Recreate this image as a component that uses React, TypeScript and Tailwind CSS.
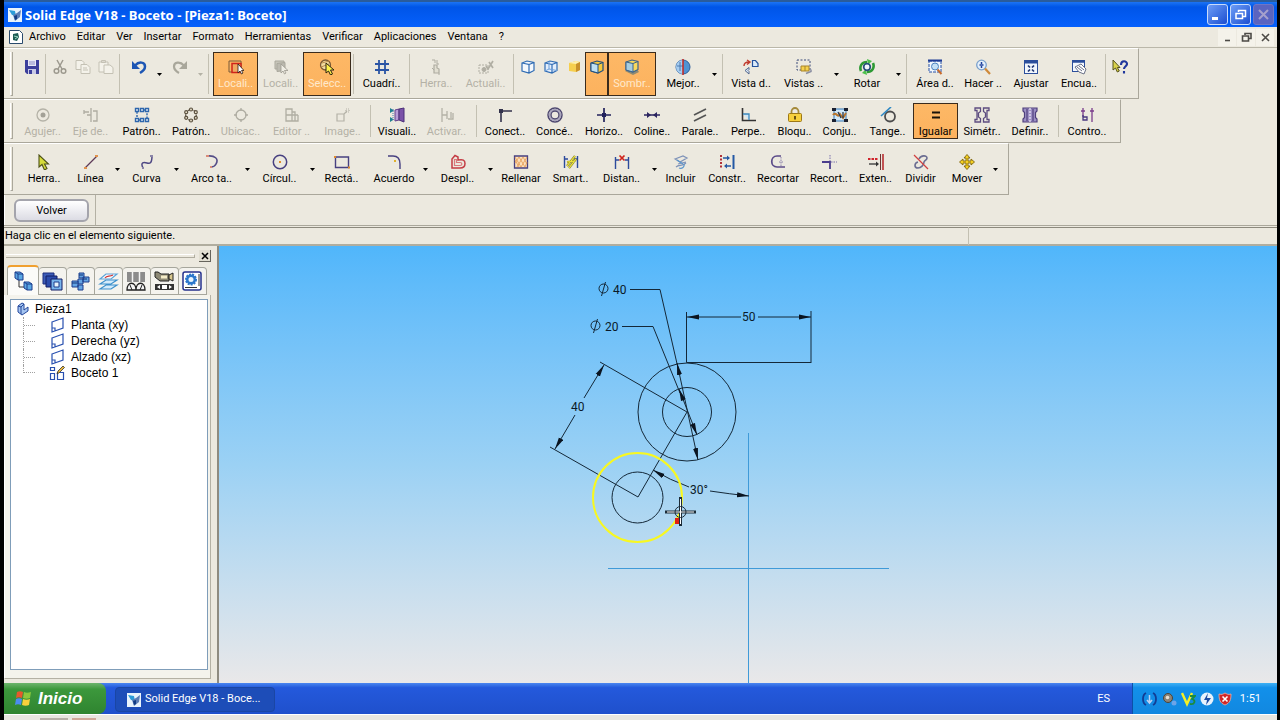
import type { ReactNode } from 'react';

const art: Record<string, ReactNode> = {
  save: (
    <>
      <path d="M1 1h14v14H3l-2-2z" fill="#3c3f9c" />
      <rect x="4" y="1" width="8" height="6" fill="#e8e8f6" />
      <path d="M5 3h6M5 5h6" stroke="#8a8cc8" />
      <rect x="4" y="10" width="8" height="5" fill="#c9cae6" />
      <rect x="5" y="11" width="3" height="4" fill="#3c3f9c" />
    </>
  ),
  cut: (
    <g fill="none" stroke="#9c998e" strokeWidth="1.5">
      <path d="M5 1l5 9M11 1L6 10" />
      <circle cx="4.5" cy="12" r="2.3" />
      <circle cx="11.5" cy="12" r="2.3" />
    </g>
  ),
  copy: (
    <g fill="#f4f2ea" stroke="#c4c1b4">
      <path d="M1 1.5h6l2 2v7H1z" />
      <path d="M6 5.500h6l3 3v6H6z" />
      <path d="M8 9h4M8 11h5" />
    </g>
  ),
  paste: (
    <g fill="#f4f2ea" stroke="#c4c1b4">
      <path d="M1 3h9v10H1zM3.500 1.500h4v2h-4z" />
      <path d="M6 6h6l3 2.500v6H6z" />
    </g>
  ),
  undo: (
    <>
      <path d="M4 6.500C8 2 14 3 14 7.500c0 3-2.500 5-5 6.500" fill="none" stroke="#1d56b4" strokeWidth="2.500" />
      <path d="M1 2v8h8z" fill="#1d56b4" />
    </>
  ),
  redo: (
    <>
      <path d="M12 6.500C8 2 2 3 2 7.500c0 3 2.500 5 5 6.500" fill="none" stroke="#a9a79b" strokeWidth="2.200" />
      <path d="M15 2v8H7z" fill="#a9a79b" />
    </>
  ),
  locate: (
    <>
      <path d="M1 2h12v11H1z" fill="none" stroke="#7a5a38" />
      <path d="M4 4.500h9v9H4z" fill="#f0a860" stroke="#d0241a" strokeWidth="1.500" />
      <path d="M10 5v9l2-2 1.500 3 1.500-1-1.500-2.500H16z" fill="#fff" stroke="#2b1a10" strokeWidth=".8" />
    </>
  ),
  locateOff: (
    <>
      <path d="M2 2h9v8H2z" fill="#c8c6bb" stroke="#a9a79c" />
      <path d="M4 4.500l8-1v8l-8 1z" fill="#bcbab0" stroke="#a9a79c" />
      <path d="M8 5v9l2-2 1.500 3 1.500-1-1.500-2.500H15z" fill="#efede4" stroke="#9a988e" strokeWidth=".8" />
    </>
  ),
  select: (
    <>
      <circle cx="6.500" cy="6" r="5" fill="#f3dca0" stroke="#7c5a34" strokeWidth="1.300" />
      <path d="M3 4l7-2M2 8l8-3" stroke="#b58a4c" />
      <path d="M7 4v10l2.500-2 2 4 2-1-2-4H15z" fill="#fff14a" stroke="#2c2410" />
    </>
  ),
  grid: <path d="M5 1v14M11 1v14M1 5h14M1 11h14" stroke="#2b55a5" strokeWidth="1.800" />,
  toolOff: (
    <g fill="none" stroke="#aeaca1">
      <path d="M4 1h3v3M9 1v4h2" />
      <path d="M6 6v8h5v-4l-2-1V6z" fill="#e2dfd2" strokeWidth="1.200" />
      <path d="M4 9l2 2M11 14v2" />
    </g>
  ),
  updateOff: (
    <g fill="none" stroke="#b0aea3">
      <path d="M1 6h9v8H1z" strokeDasharray="2 1" />
      <circle cx="6" cy="10.500" r="2" fill="#b0aea3" />
      <path d="M8 7l2 3 5-8M11 3l4 6" strokeWidth="1.700" />
    </g>
  ),
  cubeWire: (
    <path d="M2 4l5-2 7 1.500v8L9 14l-7-2zM2 4l7 1.500V14M9 5.500l5-2" fill="#f4f8fc" stroke="#2f6cb4" strokeWidth="1.200" />
  ),
  cubeHidden: (
    <>
      <path d="M2 4l5-2 7 1.500v8L9 14l-7-2zM2 4l7 1.500V14M9 5.500l5-2" fill="#e3eefb" stroke="#2f6cb4" strokeWidth="1.200" />
      <path d="M6 2.500V10l-4 2M6 10l8 1.500" fill="none" stroke="#6da0dc" />
    </>
  ),
  cubeSolid: (
    <>
      <path d="M3 4l7-2 4 1v8l-4 2-7-1z" fill="#f6cf4e" />
      <path d="M3 4l7-2 4 1-4 2z" fill="#fdf0b0" />
      <path d="M10 5l4-2v8l-4 2z" fill="#c9912a" />
    </>
  ),
  cubeEdges: (
    <>
      <path d="M2 4l6-2 6 1.500v8L9 14l-7-2z" fill="#f8c93c" stroke="#1f4f80" strokeWidth="1.200" />
      <path d="M2 4l7 1.500V14l-7-2z" fill="#bfe0f2" stroke="#1f4f80" />
      <path d="M9 5.500l5-2" stroke="#1f4f80" />
    </>
  ),
  cubeShadow: (
    <>
      <path d="M1 12l8 4 6-3-2-3z" fill="#8f8a72" />
      <path d="M2 3l6-2 6 1.500v8L9 13l-7-2z" fill="#f8d95c" stroke="#3c648c" strokeWidth="1.200" />
      <path d="M2 3l7 1.500V13l-7-2z" fill="#a7cde0" stroke="#3c648c" />
      <path d="M9 4.500l5-2" stroke="#3c648c" />
    </>
  ),
  sphere: (
    <>
      <circle cx="8" cy="8" r="7" fill="#4f93d4" stroke="#2d5f9c" />
      <path d="M8 1a7 7 0 0 0 0 14z" fill="#a7cdf0" />
      <path d="M2 7h6M5 3v9" stroke="#4c7ab0" />
      <path d="M8 0v16" stroke="#c8241c" strokeWidth="1.500" />
    </>
  ),
  viewRotate: (
    <>
      <path d="M1 7c0-3 2-4 5-4M4 1l3 2-3 2.500" fill="none" stroke="#c03a2c" strokeWidth="1.400" />
      <path d="M9.500 1.500h3l2.500 3v3H9.500z" fill="#dcebfa" stroke="#24519c" strokeWidth="1.200" />
      <path d="M6 8.500l-4 3 4 3.500v-2.500l-1-1 1-1z" fill="#dcebfa" stroke="#52668c" />
    </>
  ),
  views: (
    <>
      <rect x="1" y="1" width="13" height="10" fill="none" stroke="#3a4a78" strokeDasharray="2 1.500" />
      <path d="M5 7h8v5H5z" fill="#f6d24c" stroke="#a8842a" />
      <path d="M9 7v5" stroke="#a8842a" />
      <path d="M10 14.500l5-2v-2" fill="none" stroke="#8b8fa2" strokeWidth="1.500" />
    </>
  ),
  rotate: (
    <>
      <path d="M2 12C0 7 3 3 8 3M14 4c2 5-1 9-6 9" fill="none" stroke="#2d9a34" strokeWidth="2.600" />
      <path d="M8 0l5 2-4 4zM8 16l-5-2 4-4z" fill="#4dc04c" />
      <circle cx="8" cy="8" r="3.300" fill="#f2f7fc" stroke="#28507c" strokeWidth="1.700" />
    </>
  ),
  zoomArea: (
    <>
      <path d="M2 2h12v11H2z" fill="#f2f7fd" stroke="#2550a8" strokeDasharray="3 1" />
      <path d="M1 1.500h14" stroke="#1d3b94" strokeWidth="2" />
      <circle cx="8" cy="7.500" r="3.500" fill="#c4e0f6" stroke="#4d83c0" />
      <path d="M10.500 10.500l4 4.500" stroke="#c76a2c" strokeWidth="2" />
    </>
  ),
  zoom: (
    <>
      <circle cx="6.500" cy="6" r="4.800" fill="#e4f0fb" stroke="#7aa0cc" strokeWidth="1.300" />
      <path d="M6.500 3v2M6.500 9V7M4.500 6h4" stroke="#1c3f9c" strokeWidth="1.500" />
      <path d="M10 9.500l5 5.500" stroke="#cf8a3a" strokeWidth="2.200" />
    </>
  ),
  fit: (
    <>
      <rect x="1.500" y="1.500" width="13" height="13" fill="#f2f7fd" stroke="#2c4f9c" />
      <path d="M1 3h14" stroke="#2c4f9c" strokeWidth="3" />
      <path d="M5 6.500l2 2M11 6.500l-2 2M5 12.500l2-2M11 12.500l-2-2" stroke="#1c3474" strokeWidth="1.700" />
    </>
  ),
  pan: (
    <>
      <rect x="1.500" y="1.500" width="12" height="11" fill="#f2f7fd" stroke="#2c4f9c" />
      <path d="M1 2.500h13" stroke="#2c4f9c" strokeWidth="2.500" />
      <path d="M4 8l6-3 5 5-2 5-5-2z" fill="#fff" stroke="#6b7288" />
      <path d="M6 8l5 4M8 7l5 4" stroke="#6b7288" />
    </>
  ),
  help: (
    <>
      <path d="M1 1v10l2.500-2 1.800 4 2-1-2-3.500H8z" fill="#d9d24a" stroke="#55521c" />
      <path d="M9 6c0-5 6-4.500 6-1 0 2-3 2.500-3 5M12 12v2.500" fill="none" stroke="#20379c" strokeWidth="2.100" />
    </>
  ),
  hole: (
    <>
      <circle cx="8" cy="8" r="6" fill="none" stroke="#b4b2a7" strokeWidth="1.300" />
      <circle cx="8" cy="8" r="2.500" fill="#a3a197" />
    </>
  ),
  axis: (
    <g fill="none" stroke="#aeaca1" strokeWidth="1.300">
      <path d="M8 1v14M10 4h4v10h-4M1 5h5M1 3v4M4 8h4" />
    </g>
  ),
  patternRect: (
    <g fill="#fff" stroke="#2d66ac" strokeWidth="1.400">
      <path d="M3 3h10v10H3z" fill="none" strokeDasharray="2 1.300" />
      <path d="M1.500 1.500h3v3h-3zM6.500 1.500h3v3h-3zM11.500 1.500h3v3h-3zM1.500 11.500h3v3h-3zM6.500 11.500h3v3h-3zM11.500 11.500h3v3h-3z" />
    </g>
  ),
  patternCirc: (
    <g fill="#e9e2cc" stroke="#5c5140" strokeWidth="1.200">
      <circle cx="8" cy="8" r="5.300" fill="none" strokeDasharray="2 1" />
      <circle cx="8" cy="2.500" r="1.500" />
      <circle cx="12.800" cy="5.200" r="1.500" />
      <circle cx="12.800" cy="10.800" r="1.500" />
      <circle cx="8" cy="13.500" r="1.500" />
      <circle cx="3.200" cy="10.800" r="1.500" />
      <circle cx="3.200" cy="5.200" r="1.500" />
    </g>
  ),
  placeOff: (
    <g fill="none" stroke="#aeaca1" strokeWidth="1.300">
      <circle cx="8" cy="8" r="5" />
      <path d="M8 1v3M8 12v3M1 8h3M12 8h3" />
    </g>
  ),
  editorOff: (
    <path d="M2 2h6v12H2zM2 8h12M8 5h3v3M8 14h6V8M11 8v6" fill="none" stroke="#b0aea3" strokeWidth="1.300" />
  ),
  imageOff: (
    <g fill="none" stroke="#b4b2a7" strokeWidth="1.200">
      <path d="M2 7h7v7H2zM9 7l3-3" />
      <path d="M11 2h3v3h-3z" strokeDasharray="1 1" />
    </g>
  ),
  visual: (
    <>
      <path d="M1 1l4 2.500L1 6zM1 10l4 2.500L1 15z" fill="#1f8090" />
      <path d="M6 3l4-1v11l-4 1z" fill="#b79cd6" stroke="#60408c" />
      <path d="M10 2l5-1v14l-5-2z" fill="#7b52a8" stroke="#4b2f78" />
      <path d="M4 2v12" stroke="#4a7ab0" strokeDasharray="1 1" />
    </>
  ),
  activateOff: (
    <path d="M3 1v14M3 8h5M8 4v8M12 5v6M9 12h5V6" fill="none" stroke="#b4b2a7" strokeWidth="1.300" />
  ),
  connect: (
    <>
      <path d="M4 15V4h11" fill="none" stroke="#33324c" strokeWidth="1.600" />
      <rect x="2" y="2" width="4" height="4" fill="#33324c" />
    </>
  ),
  concentric: (
    <g fill="none" stroke="#4e4870">
      <circle cx="8" cy="8" r="7" strokeWidth="1.500" />
      <circle cx="8" cy="8" r="5.500" stroke="#a9a5bd" strokeWidth="1.500" />
      <circle cx="8" cy="8" r="4" strokeWidth="1.400" />
    </g>
  ),
  horizontal: (
    <>
      <path d="M1 8h14M8 1v14" stroke="#22225c" strokeWidth="1.700" />
      <path d="M6 6h4v4H6z" fill="#22225c" />
    </>
  ),
  collinear: (
    <>
      <path d="M0 8h16" stroke="#2b2560" strokeWidth="1.500" />
      <path d="M3 5l4 3-4 3zM13 5L9 8l4 3z" fill="#2b2560" />
    </>
  ),
  parallel: <path d="M2 8l12-6M2 14l12-6" stroke="#555" strokeWidth="1.700" />,
  perpendicular: (
    <>
      <path d="M2.500 1v12.500H16" fill="none" stroke="#333" strokeWidth="1.600" />
      <path d="M3 7h6v6" fill="#cfe6f6" stroke="#3c88bc" strokeWidth="1.300" />
    </>
  ),
  lock: (
    <>
      <path d="M4.500 7V4.500a3.500 3.500 0 0 1 7 0V7" fill="none" stroke="#a58a3a" strokeWidth="1.800" />
      <rect x="1.500" y="6.500" width="13" height="8" rx="1" fill="#f6cf3c" stroke="#9c7818" />
      <path d="M8 9v3.500" stroke="#5a430c" strokeWidth="1.800" />
    </>
  ),
  rigidSet: (
    <>
      <path d="M2 2h12v12H2z" fill="#cfe7f8" stroke="#3478b8" />
      <path d="M0 1h4v3H0zM12 1h4v3h-4zM0 12h4v3H0zM12 12h4v3h-4z" fill="#1b2030" />
      <path d="M1 8c3-4 5 4 7-1l3 4 3-5" fill="none" stroke="#b8752c" strokeWidth="2" />
      <path d="M6 5l3 6M11 5v6" stroke="#29384c" strokeWidth="1.300" />
    </>
  ),
  tangent: (
    <>
      <circle cx="10" cy="9.500" r="5" fill="none" stroke="#4d4d4d" strokeWidth="1.800" />
      <path d="M1 9L11 0" stroke="#2d88c4" strokeWidth="1.600" />
    </>
  ),
  equal: <path d="M4 5.500h8M4 10.500h8" stroke="#1a130a" strokeWidth="2.200" />,
  symmetric: (
    <g fill="none" stroke="#5d4c80" strokeWidth="1.300">
      <path d="M1 1h5.500v3.500L4.500 6v4l2 1.500V15H1v-2.500h2v-9H1z" />
      <path d="M15 1H9.500v3.500L11.500 6v4l-2 1.500V15H15v-2.500h-2v-9h2z" />
    </g>
  ),
  defineSym: (
    <g fill="#9c8fc4" stroke="#4e3f7c" strokeWidth="1.200">
      <path d="M1 1h14v3l-1.500 1.500v5L15 12v3H1v-3l1.500-1.500v-5L1 4z" />
      <path d="M8 1v14" stroke="#efeaf8" strokeDasharray="2 1" />
      <path d="M5 2v12M11 2v12" />
    </g>
  ),
  controller: (
    <g fill="none" stroke="#7a3d8c" strokeWidth="1.300">
      <path d="M4 1v9M2 4h4M13 1v14M11 4h4M13 2v3" />
      <path d="M4 8v5h4v-3H4" stroke="#4a3880" />
    </g>
  ),
  pointer: (
    <path d="M3 1v12l3-2.500L8.500 16l2.500-1.500L8.500 10h4z" fill="#d6dc3c" stroke="#4c5018" strokeWidth="1.100" />
  ),
  line: (
    <>
      <path d="M2 14L14 2" stroke="#5c3a58" strokeWidth="1.300" />
      <path d="M1 13h3v2H1zM12 1h3v2h-3z" fill="#e0924c" />
    </>
  ),
  curve: (
    <>
      <path d="M3 13c-3-6 1-6 4-5s5 0 5-7" transform="translate(1 1)" fill="none" stroke="#4e4784" strokeWidth="1.500" />
      <path d="M11 1h3v2h-3zM3 13h2v2H3z" fill="#8c86a8" />
    </>
  ),
  arc: (
    <>
      <path d="M3 2c8-1 12 3 9 8-1 2-3 3-5 3" fill="none" stroke="#554e88" strokeWidth="1.600" />
      <path d="M2 1h3v2H2zM6 12h2v2H6z" fill="#d98a78" />
    </>
  ),
  circle: (
    <>
      <circle cx="8" cy="8" r="6.700" fill="none" stroke="#474080" strokeWidth="1.500" />
      <path d="M7 7h2v2H7z" fill="#e08c2c" />
    </>
  ),
  rectangle: (
    <>
      <path d="M1.500 3h13v10.500h-13z" fill="none" stroke="#474080" strokeWidth="1.400" />
      <path d="M0 2h2v2H0zM14 12.500h2v2h-2z" fill="#e08c2c" />
    </>
  ),
  fillet: (
    <>
      <path d="M2 2h5c5 0 7 3 7 8v5" fill="none" stroke="#474080" strokeWidth="1.400" />
      <path d="M8 6h2v2H8z" fill="#e0b02c" />
    </>
  ),
  offset: (
    <g fill="none" strokeWidth="1.500">
      <path d="M2 5l3-3.500L8 3v3c5-1 7 0 7 3.500S12 14 10 14H2z" stroke="#c43c44" />
      <path d="M4.500 5.500v6H10c2.500 0 2.500-3 0-3H6.500v-3z" stroke="#d8797c" strokeWidth="1.200" />
    </g>
  ),
  fill: (
    <>
      <path d="M1.500 2h13v12h-13z" fill="#fce0bc" stroke="#474080" strokeWidth="1.300" />
      <path d="M2 6l4 7M2 3l6 10M6 3l6 10M10 3l4 7M6 3L2 9M10 3L4 13M14 3L8 13M14 8l-2 5" stroke="#e49a54" strokeWidth=".8" />
    </>
  ),
  smartDim: (
    <>
      <path d="M1.500 2v12M14.500 2v12M1 5h4M11 5h4" stroke="#2c4a9c" strokeWidth="1.400" />
      <path d="M4 12L12 2M6 14l7-9M4 8l8-1" stroke="#8a8424" strokeWidth="2.200" />
      <path d="M4 12L12 2M6 14l7-9M4 8l8-1" stroke="#f2ea3c" strokeWidth="1.200" />
    </>
  ),
  distance: (
    <>
      <path d="M1.500 3v12M14.500 3v12M1 6h4M11 6h4" stroke="#2c4a9c" strokeWidth="1.400" />
      <path d="M5.500 1.500l5 5M10.500 1.500l-5 5" stroke="#d0241c" strokeWidth="1.700" />
    </>
  ),
  include: (
    <g fill="none" strokeWidth="1.200">
      <path d="M2 5l8-3 4 2-7 4zM5 10l8-2M3 13c3-3 6 0 10-4" stroke="#7e92b8" />
      <path d="M6 14c3 1 6-1 5-4M4 6l6 4" stroke="#5a96cc" />
    </g>
  ),
  construction: (
    <>
      <path d="M2 1v14" stroke="#b03038" strokeWidth="2" strokeDasharray="2 1.500" />
      <path d="M14.500 1v14" stroke="#2458a4" strokeWidth="2" />
      <path d="M4 4h6M12 12H6" stroke="#2458a4" strokeWidth="1.300" />
      <path d="M8 1.500L11 4 8 6.500zM8 9.500L5 12l3 2.500z" fill="#2458a4" />
    </>
  ),
  trim: (
    <>
      <path d="M11 2H7C0 2 0 13 7 13h8" fill="none" stroke="#5a4a88" strokeWidth="1.700" />
      <path d="M11 3v9M9 8h5" stroke="#8d83ac" strokeDasharray="1.500 1" />
    </>
  ),
  trimCorner: (
    <>
      <path d="M1 8h8v7" fill="none" stroke="#4a3c8c" strokeWidth="1.800" />
      <path d="M9 1v6M10 8h6" stroke="#7a70ac" strokeDasharray="1.500 1" />
    </>
  ),
  extend: (
    <>
      <path d="M0 5h10" stroke="#d0242c" strokeWidth="2" strokeDasharray="2.500 1" />
      <path d="M1 10h8" stroke="#333" strokeWidth="1.300" />
      <path d="M8 7.500l3 2.500-3 2.500z" fill="#333" />
      <path d="M12.500 0v16" stroke="#6c3434" />
      <path d="M15 0v16" stroke="#b82c30" strokeWidth="1.600" />
    </>
  ),
  divide: (
    <>
      <path d="M6 5c2-4 8-4 8-1 0 2-2 2-3 4 0 3-3 6-6 6-4 0-4-5 0-6" fill="none" stroke="#6c6e92" strokeWidth="1.600" />
      <path d="M1 1l14 14" stroke="#d04040" strokeWidth="1.300" />
    </>
  ),
  move: (
    <path
      d="M8 .5L11 4H9v3h3V5l3.500 3-3.500 3V9H9v3h2l-3 3.500L5 12h2V9H4v2L.5 8 4 5v2h3V4H5z"
      fill="#f4d024"
      stroke="#80640c"
      strokeWidth=".9"
    />
  ),
};

type Item =
  | { kind: 'sep'; wide?: boolean }
  | { kind: 'arrow'; off?: boolean }
  | { kind: 'tool'; icon: string; label?: string; name?: string; w: string; state?: 'on' | 'off' };

const sep: Item = { kind: 'sep' };
const wideSep: Item = { kind: 'sep', wide: true };
const arrow: Item = { kind: 'arrow' };

const ICON = 'w-[23px]';
const XS = 'w-[45px]';
const SM = 'w-12';
const MD = 'w-[51px]';
const LG = 'w-[54px]';
const XL = 'w-[57px]';

const t = (icon: string, label: string, w: string, state?: 'on' | 'off'): Item => ({ kind: 'tool', icon, label, w, state });
const i = (icon: string, name: string, w: string = ICON, state?: 'on' | 'off'): Item => ({ kind: 'tool', icon, name, w, state });

const mainBar: Item[] = [
  i('save', 'Guardar'), sep,
  i('cut', 'Cortar', ICON, 'off'), i('copy', 'Copiar', ICON, 'off'), i('paste', 'Pegar', ICON, 'off'), sep,
  i('undo', 'Deshacer', 'w-[33px]'), arrow, i('redo', 'Rehacer', 'w-[33px]', 'off'), { kind: 'arrow', off: true }, wideSep,
  t('locate', 'Locali..', XS, 'on'), t('locateOff', 'Locali..', XS, 'off'), t('select', 'Selecc..', SM, 'on'), sep,
  t('grid', 'Cuadrí..', MD), sep,
  t('toolOff', 'Herra..', SM, 'off'), t('updateOff', 'Actuali..', MD, 'off'), sep,
  i('cubeWire', 'Alámbrico'), i('cubeHidden', 'Aristas ocultas'), i('cubeSolid', 'Sombreado'), i('cubeEdges', 'Sombreado con aristas', ICON, 'on'),
  t('cubeShadow', 'Sombr..', SM, 'on'),
  t('sphere', 'Mejor..', LG), arrow, wideSep,
  t('viewRotate', 'Vista d..', SM), t('views', 'Vistas ..', XL), arrow, t('rotate', 'Rotar', LG), arrow, wideSep,
  t('zoomArea', 'Área d..', SM), t('zoom', 'Hacer ..', SM), t('fit', 'Ajustar', SM), t('pan', 'Encua..', SM), sep,
  i('help', 'Ayuda'),
];

const relationsBar: Item[] = [
  t('hole', 'Agujer..', XS, 'off'), t('axis', 'Eje de..', MD, 'off'), t('patternRect', 'Patrón..', MD), t('patternCirc', 'Patrón..', SM),
  t('placeOff', 'Ubicac..', MD, 'off'), t('editorOff', 'Editor ..', MD, 'off'), t('imageOff', 'Image..', MD, 'off'), sep,
  t('visual', 'Visuali..', SM), t('activateOff', 'Activar..', MD, 'off'), wideSep,
  t('connect', 'Conect..', SM), t('concentric', 'Concé..', MD), t('horizontal', 'Horizo..', SM), t('collinear', 'Coline..', SM),
  t('parallel', 'Parale..', SM), t('perpendicular', 'Perpe..', SM), t('lock', 'Bloqu..', XS), t('rigidSet', 'Conju..', XS),
  t('tangent', 'Tange..', MD), t('equal', 'Igualar', XS, 'on'), t('symmetric', 'Simétr..', SM), t('defineSym', 'Definir..', SM), wideSep,
  t('controller', 'Contro..', SM),
];

const drawBar: Item[] = [
  t('pointer', 'Herra..', SM), t('line', 'Línea', XS), arrow, t('curve', 'Curva', MD), arrow, t('arc', 'Arco ta..', 'w-[63px]'), arrow,
  t('circle', 'Círcul..', XL), arrow, t('rectangle', 'Rectá..', MD), t('fillet', 'Acuerdo', LG), arrow, t('offset', 'Despl..', XL), arrow,
  t('fill', 'Rellenar', LG), t('smartDim', 'Smart..', XS), t('distance', 'Distan..', XL), arrow, t('include', 'Incluir', XS),
  t('construction', 'Constr..', SM), t('trim', 'Recortar', LG), t('trimCorner', 'Recort..', SM), t('extend', 'Exten..', XS),
  t('divide', 'Dividir', XS), t('move', 'Mover', SM), arrow,
];

function Tool({ item, tall }: { item: Item; tall: boolean }) {
  if (item.kind === 'sep')
    return (
      <div className={`flex shrink-0 justify-center ${item.wide ? 'w-[9px]' : 'w-[5px]'}`}>
        <div className="my-0.5 w-px bg-[#c3c0b2]" />
      </div>
    );
  if (item.kind === 'arrow')
    return (
      <button aria-label="Más opciones" className="flex w-2 shrink-0 items-center justify-center">
        <svg viewBox="0 0 5 3" className="h-[3px] w-[5px]">
          <path d="M0 0h5L2.500 3z" fill={item.off ? '#b4b2a6' : '#000'} />
        </svg>
      </button>
    );
  const tone =
    item.state === 'on'
      ? 'border-[#3a2b1c] bg-linear-to-b from-[#fdb866] to-[#fcb25e]'
      : 'border-transparent';
  const ink =
    item.state === 'off' ? 'text-[#b4b1a6]' : item.state === 'on' && item.icon !== 'equal' ? 'text-[#ffe9cc]' : 'text-black';
  return (
    <button
      aria-label={item.label ? undefined : item.name}
      className={`flex shrink-0 flex-col items-center border ${item.w} ${tall ? 'pt-1.5' : 'pt-[3px]'} ${tone}`}
    >
      <svg viewBox="0 0 16 16" className="size-4 shrink-0">{art[item.icon]}</svg>
      {item.label && <span className={`h-4 text-[11px] leading-[18px] whitespace-nowrap ${ink}`}>{item.label}</span>}
    </button>
  );
}

function Bar({ items, name, tall = true, pad }: { items: Item[]; name: string; tall?: boolean; pad: string }) {
  return (
    <div
      role="toolbar"
      aria-label={name}
      className={`flex w-fit border-t border-r border-b border-t-white border-r-[#aaa79b] border-b-[#aaa79b] ${pad}`}
    >
      <div className="flex w-4 shrink-0 pl-1.5">
        <div className="w-[3px] border-r border-b border-[#aaa79b] border-l border-l-white" />
      </div>
      <div className={`flex ${tall ? 'h-11' : 'h-9'}`}>
        {items.map((item, n) => (
          <Tool key={n} item={item} tall={tall} />
        ))}
      </div>
    </div>
  );
}

const Logo = () => (
  <svg viewBox="0 0 14 14" className="size-3.5 shrink-0">
    <path d="M0 0h14v14H0z" fill="#e9f4fc" />
    <path d="M1 2l6 1 1 5-4-1z" fill="#2c9cd8" />
    <path d="M5 7l4-2 4-3-1 7-5 4z" fill="#5a7cb4" />
    <path d="M6 8l3-1v4l-2 1z" fill="#123c84" />
  </svg>
);

const menus = ['Archivo', 'Editar', 'Ver', 'Insertar', 'Formato', 'Herramientas', 'Verificar', 'Aplicaciones', 'Ventana', '?'];

function TitleBar() {
  const box = 'flex size-[21px] items-center justify-center rounded-[3px] border border-[#c9dcfb]';
  return (
    <header className="flex h-[27px] items-center gap-[3px] border-t-2 border-[#2a5c9c] bg-linear-to-b from-[#1c74f4] via-[#0055e8] via-20% to-[#0660fc] pr-[3px] pl-1">
      <Logo />
      <h1 className="flex-1 font-['Noto_Sans','Open_Sans',sans-serif] text-[13px] leading-4 font-bold text-white">
        Solid Edge V18 - Boceto - [Pieza1: Boceto]
      </h1>
      <div className="flex gap-0.5">
        <button aria-label="Minimizar" className={`${box} bg-linear-to-br from-[#6d9cf6] to-[#1c4cd0]`}>
          <svg viewBox="0 0 13 13" className="size-[13px]"><path d="M1 9h6v3H1z" fill="#fff" /></svg>
        </button>
        <button aria-label="Restaurar" className={`${box} bg-linear-to-br from-[#6d9cf6] to-[#1c4cd0]`}>
          <svg viewBox="0 0 13 13" className="size-[13px]">
            <path d="M4.500 4V2.500h7v6H9" fill="none" stroke="#fff" strokeWidth="1.500" />
            <path d="M2 5.500h6.500v5H2z" fill="none" stroke="#fff" strokeWidth="1.500" />
          </svg>
        </button>
        <button aria-label="Cerrar" className="flex size-[21px] items-center justify-center rounded-[3px] border border-[#6f76c4] bg-[#5a64c0]">
          <svg viewBox="0 0 13 13" className="size-[13px]"><path d="M2 2l9 9M11 2l-9 9" stroke="#a5a0cc" strokeWidth="2" /></svg>
        </button>
      </div>
    </header>
  );
}

function MenuBar() {
  return (
    <nav className="flex h-5 items-center pr-[3px] pl-[5px]">
      <svg viewBox="0 0 14 14" className="size-3.5 shrink-0">
        <path d="M.5.5h10l3 3v10H.5z" fill="#fff" stroke="#2a4a6c" />
        <path d="M4 4l5-1 1 4-2 4-4-1z" fill="#1c5c54" />
        <path d="M5 6l4 1-3 2" fill="none" stroke="#9cd8c4" />
      </svg>
      <ul className="flex flex-1 gap-[11px] pl-1.5 text-[11px] leading-4">
        {menus.map((m) => (
          <li key={m}><button>{m}</button></li>
        ))}
      </ul>
      <div className="flex gap-px">
        {[
          ['Minimizar ventana', 'M4 9.500h5'],
          ['Restaurar ventana', 'M5 4V2.500h6v5H9M2.500 5h6v5h-6z'],
          ['Cerrar ventana', 'M3 3l7 7M10 3l-7 7'],
        ].map(([name, d]) => (
          <button key={name} aria-label={name} className="flex h-[17px] w-[18px] items-center justify-center bg-[#f4f2ea]">
            <svg viewBox="0 0 13 13" className="size-[13px]">
              <path d={d} fill="none" stroke="#4c4a46" strokeWidth="1.600" />
            </svg>
          </button>
        ))}
      </div>
    </nav>
  );
}

const tabs: [string, ReactNode][] = [
  ['Operaciones', (
    <>
      <path d="M6 9v7h6" fill="none" stroke="#333" />
      <path d="M2 1h5l3 2v6H5L2 7zM11 11h5l3 2v6h-5l-3-2z" fill="#5ba8e4" stroke="#1c3c8c" />
      <path d="M2 1l3 2h5M5 3v6M11 11l3 2h5M14 13v6" fill="none" stroke="#1c3c8c" />
    </>
  )],
  ['Familia', (
    <>
      <path d="M1 2h11v11H1z" fill="#3c5cb8" stroke="#1c2c7c" />
      <path d="M4 5h11v11H4z" fill="#2c4cac" stroke="#121c64" />
      <path d="M9 8h11v11H9z" fill="#78b4ec" stroke="#121c64" />
      <path d="M12 11h5v5h-5z" fill="#e8f4fc" stroke="#1c3c8c" />
    </>
  )],
  ['Sensores', (
    <g fill="#64a4e4" stroke="#1c3c8c">
      <path d="M9 2h5v5H9zM13 6h6v5h-6zM8 8h5v5H8zM2 10h6v6H2zM8 14h5v5H8z" />
      <path d="M9 4h4M13 8h4M2 12h5" stroke="#123074" />
    </g>
  )],
  ['Capas', (
    <g strokeWidth="1.200">
      <path d="M2 18l6-4h11l-6 4zM2 13l6-4h11l-6 4z" fill="#d4ebfa" stroke="#3c90cc" />
      <path d="M2 8l6-5h11l-6 5z" fill="#f8fbfe" stroke="#5ca4d8" />
      <path d="M7 7c2-3 4-1 8-3" fill="none" stroke="#d03030" />
    </g>
  )],
  ['Estilos', (
    <>
      <path d="M1 1h18v10H1z" fill="#8c8c8c" />
      <path d="M6.500 1v10M13.500 1v10" stroke="#f4f4f4" strokeWidth="1.500" />
      <path d="M1 19c0-9 9-9 9 0zM10 19c0-9 9-9 9 0z" fill="#f4f4f4" stroke="#222" strokeWidth="1.300" />
      <path d="M6 19l-2-5M14 19l2-5" stroke="#222" />
    </>
  )],
  ['Reproducción', (
    <>
      <path d="M1 1h3l3 2h8v7H6L1 6z" fill="#8c8874" stroke="#222" />
      <path d="M15 4l4-2v8l-4-2z" fill="#d8c890" stroke="#222" />
      <path d="M7 4.500h6v3H7z" fill="#f4ecc8" />
      <path d="M1 13h19v6H1z" fill="#333" />
      <path d="M8 14h5v4H8zM3 16l3-2v4zM18 16l-3-2v4z" fill="#fff" />
    </>
  )],
  ['Simulación', (
    <>
      <rect x="1" y="1" width="18" height="18" rx="2" fill="#fff" stroke="#24308c" strokeWidth="1.500" />
      <circle cx="9" cy="8.500" r="5" fill="#2c78cc" stroke="#2c78cc" strokeWidth="2" strokeDasharray="2 1" />
      <circle cx="9" cy="8.500" r="2.500" fill="#e8f4fc" />
      <path d="M3 16.500h12M17 3v12" stroke="#333" />
    </>
  )],
];

const planes = ['Planta (xy)', 'Derecha (yz)', 'Alzado (xz)'];

function SidePanel() {
  return (
    <aside className="flex w-[215px] shrink-0 flex-col border-r-2 border-[#8e8b80] pt-0.5 pr-1.5 pb-1">
      <div className="flex h-4 items-center gap-1 pl-0.5">
        <div className="h-1 flex-1 border-t border-b border-t-white border-b-[#b0ad9f] border-r border-r-[#b0ad9f]" />
        <button aria-label="Cerrar panel" className="flex size-3 items-center justify-center border-r border-b border-[#66645c] bg-[#e2dfd2]">
          <svg viewBox="0 0 8 8" className="size-2"><path d="M1 1l6 6M7 1L1 7" stroke="#000" strokeWidth="1.500" /></svg>
        </button>
      </div>
      <div role="tablist" className="flex h-[31px] items-end pl-[3px]">
        {tabs.map(([name, drawing], n) => (
          <button
            key={name}
            role="tab"
            aria-label={name}
            aria-selected={n === 0}
            className={
              n === 0
                ? 'flex h-[30px] w-8 items-center justify-center rounded-t border border-b-0 border-t-2 border-[#a6a69c] border-t-[#f0a030] bg-[#fbfbf8]'
                : 'flex h-7 w-7 items-center justify-center rounded-t border border-l-0 border-[#a6a69c] bg-[#f4f3ee]'
            }
          >
            <svg viewBox="0 0 21 21" className="size-[21px]">{drawing}</svg>
          </button>
        ))}
      </div>
      <div className="flex flex-1 flex-col border-r border-b border-l border-[#b4b1a4] border-l-white bg-[#f4f3ec] pt-1 pr-0.5 pb-2 pl-[5px]">
        <div className="flex-1 border border-[#7f9db9] bg-white pt-px pl-1.5 font-['Liberation_Sans',Arial,sans-serif] text-[12px] leading-4">
          <div className="flex items-center gap-1.5">
            <svg viewBox="0 0 12 14" className="h-3.5 w-3">
              <path d="M1 4l4-3 2 1v6l4-3v4l-6 4-4-3z" fill="#a4c4f0" stroke="#24489c" />
              <path d="M1 4l3 1v7M4 5l3-3" fill="none" stroke="#24489c" />
            </svg>
            <span>Pieza1</span>
          </div>
          <ul className="ml-1.5 flex flex-col">
            {[...planes, 'Boceto 1'].map((name, n) => (
              <li key={name} className="flex h-4 items-center">
                <span className={`w-3 border-l border-dotted border-[#a0a0a0] ${n === 3 ? 'h-2 self-start' : 'h-4'} flex items-center`}>
                  <span className={`w-full border-t border-dotted border-[#a0a0a0] ${n === 3 ? 'self-end' : ''}`} />
                </span>
                <svg viewBox="0 0 16 16" className="mx-1.5 ml-3.5 size-4">
                  {n < 3 ? (
                    <path d="M3 5l11-4v10L3 15zM3 11h3v3" fill="#fff" stroke="#2850b0" strokeWidth="1.200" />
                  ) : (
                    <>
                      <path d="M1.500 2.500h4v3h-4zM1.500 8.500h4v6h-4zM8.500 7.500h6v7h-6z" fill="#fff" stroke="#2850b0" strokeWidth="1.200" />
                      <path d="M8 9l1-3 5-5 1.500 1.500-5 5z" fill="#e8b83c" stroke="#333" strokeWidth=".8" />
                    </>
                  )}
                </svg>
                <span>{name}</span>
              </li>
            ))}
          </ul>
        </div>
      </div>
    </aside>
  );
}

function Sketch() {
  return (
    <main className="min-w-0 flex-1 overflow-hidden bg-linear-to-b from-[#50b6fb] via-[#9bd1f4] via-50% to-[#e9e8e9]">
      <svg viewBox="219 246 680 437" className="h-[437px] w-[680px]" role="img" aria-label="Boceto acotado">
        <defs>
          <marker id="tip" viewBox="0 0 12 6" refX="12" refY="3" markerWidth="12" markerHeight="6" markerUnits="userSpaceOnUse" orient="auto-start-reverse">
            <path d="M0 .5L12 3 0 5.500z" fill="#0a1420" />
          </marker>
        </defs>
        <path d="M748.500 433V683M608 568.500h281" stroke="#3f9ad8" />
        <g fill="none" stroke="#142838">
          <circle cx="687" cy="412" r="49" />
          <circle cx="687" cy="412" r="24.500" />
          <circle cx="637.500" cy="497.500" r="25.500" />
          <path d="M687 412L638 497M600 362L687 412M550 447L638 497" />
          <path d="M686.500 312V362.500H811.500M811 311V362" />
          <path d="M630 289.500h30L678 368M622 326.500h31L680 393" />
          <path d="M687 317h54" markerStart="url(#tip)" />
          <path d="M811 317h-53" markerStart="url(#tip)" />
          <path d="M604 365L584 398" markerStart="url(#tip)" />
          <path d="M555 449L575 415" markerStart="url(#tip)" />
          <path d="M677 363L698 460" markerStart="url(#tip)" markerEnd="url(#tip)" />
          <path d="M679 389L697 435" markerStart="url(#tip)" markerEnd="url(#tip)" />
          <path d="M653 470Q670 480 689 487" markerStart="url(#tip)" />
          <path d="M749 496Q730 494 710 491" markerStart="url(#tip)" />
          <circle cx="603.500" cy="288.500" r="4.500" />
          <path d="M605.500 282l-4 14" />
          <circle cx="595.500" cy="325.500" r="4.500" />
          <path d="M597.500 319l-4 14" />
        </g>
        <g fill="#0a1a28" className="font-['Roboto','Liberation_Sans',sans-serif] text-[12px]">
          <text x="613" y="294">40</text>
          <text x="605" y="331">20</text>
          <text x="742" y="321">50</text>
          <text x="571" y="411">40</text>
          <text x="690" y="494">30°</text>
        </g>
        <circle cx="637.500" cy="497.500" r="44.500" fill="none" stroke="#f8f820" strokeWidth="2" />
        <path d="M675 518h5v6h-5z" fill="#e02010" />
        <g fill="none">
          <path d="M665 512h31M680.500 497v29" stroke="#1c2c38" strokeWidth="3" />
          <path d="M667 512h27M680.500 499v25" stroke="#fff" />
          <circle cx="680.500" cy="512" r="5.500" stroke="#1c2c38" />
        </g>
      </svg>
    </main>
  );
}

function Taskbar() {
  return (
    <footer className="flex h-[31px] shrink-0 bg-linear-to-b from-[#4a86f0] via-[#2459dc] via-15% to-[#1f50cc] text-[11px] text-white">
      <button className="flex w-[102px] items-center gap-1.5 rounded-r-lg bg-linear-to-b from-[#6cb46c] via-[#3c983c] via-20% to-[#2f8430] pl-[11px]">
        <svg viewBox="0 0 17 17" className="size-[17px]">
          <path d="M2 2c2-1 4-1 6 0L7 8C5 7 3 7 1 8z" fill="#e8582c" />
          <path d="M9 2c2 1 4 1 7 0l-1 6c-2 1-5 1-7 0z" fill="#8cc83c" />
          <path d="M1 9c2-1 4-1 6 0l-1 6c-2-1-4-1-6 0z" fill="#4c8cf0" />
          <path d="M8 9c2 1 5 1 7 0l-1 6c-2 1-5 1-7 0z" fill="#f8d03c" />
        </svg>
        <span className="font-['Liberation_Sans',Arial,sans-serif] text-[17px] leading-5 font-bold italic">Inicio</span>
      </button>
      <button className="mt-1 mb-0.5 ml-[9px] flex w-40 items-center gap-1 rounded-sm border border-[#1a46a4] bg-[#1d4db8] pl-[11px]">
        <Logo />
        <span>Solid Edge V18 - Boce...</span>
      </button>
      <div className="flex-1" />
      <span className="self-center pt-0.5 pr-[22px]">ES</span>
      <div className="flex w-[145px] items-center gap-1 border-l border-[#0c50a8] bg-linear-to-b from-[#3cb0f4] via-[#1290ea] via-15% to-[#1288e0] pl-2">
        <svg viewBox="0 0 17 16" className="h-4 w-[17px]">
          <path d="M5 2C1 4 1 12 5 14M12 2c4 2 4 10 0 12" fill="none" stroke="#123c94" strokeWidth="1.800" />
          <path d="M8.500 4v8M6 9l2.500 3L11 9" fill="none" stroke="#c0d0f0" strokeWidth="1.500" />
        </svg>
        <svg viewBox="0 0 15 16" className="h-4 w-[15px]">
          <circle cx="6" cy="7" r="4.500" fill="#8c8478" stroke="#4c4438" />
          <circle cx="5.500" cy="6.500" r="1.800" fill="#e8e0d4" />
          <circle cx="12" cy="12" r="2.500" fill="#6ca4e8" />
        </svg>
        <svg viewBox="0 0 15 16" className="h-4 w-[15px]">
          <path d="M1 2l5 11 5-11" fill="none" stroke="#f4f024" strokeWidth="2.400" />
          <path d="M9 5h5l-3 3c4 1 3 6-2 5" fill="none" stroke="#1c8c3c" strokeWidth="1.800" />
        </svg>
        <svg viewBox="0 0 14 14" className="size-3.5">
          <circle cx="7" cy="7" r="6.500" fill="#e8f2fc" />
          <path d="M8 1L4 8h3l-1 5 5-7H7z" fill="#1c4ca4" />
        </svg>
        <svg viewBox="0 0 14 14" className="size-3.5">
          <path d="M1 2c3 1 4 0 6-1 2 1 3 2 6 1 0 6-1 9-6 11C2 11 1 8 1 2z" fill="#d02828" stroke="#f0b0a0" strokeWidth=".8" />
          <path d="M4.500 4.500l5 5M9.500 4.500l-5 5" stroke="#fff" strokeWidth="1.600" />
        </svg>
        <time className="ml-auto pt-0.5 pr-4">1:51</time>
      </div>
    </footer>
  );
}

export default function App() {
  return (
    <div className="flex min-h-screen flex-col overflow-hidden bg-black pr-[3px] pl-1 font-['Roboto','Noto_Sans',sans-serif] text-black">
      <div className="flex flex-1 flex-col bg-[#ece9df]">
        <TitleBar />
        <MenuBar />
        <div className="border-t border-[#bab7a9]" />
        <Bar items={mainBar} name="Principal" pad="pr-[7px] pt-[3px] pb-0.5" />
        <Bar items={relationsBar} name="Relaciones" tall={false} pad="pr-[9px] py-[3px]" />
        <Bar items={drawBar} name="Dibujo" pad="pr-[9px] py-[3px]" />
        <div className="flex h-[31px] border-b border-[#aaa79b]">
          <div className="flex items-center border-l border-r border-l-white border-r-[#b4b1a4] pr-1.5 pl-[9px]">
            <button className="h-[23px] w-[75px] rounded-md border-2 border-[#a4a4ac] bg-linear-to-b from-white to-[#dcdce4] pt-px text-[11px] leading-4">
              Volver
            </button>
          </div>
        </div>
        <div className="mt-px flex h-[19px] items-center border-t border-b-2 border-[#8c897d] border-b-[#b0ad9f] text-[11px] leading-[18px]">
          <p className="w-[965px] border-r border-[#c3c0b2] pl-px">Haga clic en el elemento siguiente.</p>
        </div>
        <div className="flex flex-1">
          <SidePanel />
          <Sketch />
        </div>
        <Taskbar />
        <div className="flex h-1.5 items-end gap-1 border-t border-white bg-[#e8e6e0] pl-9">
          <div className="h-0.5 w-7 bg-[#b8b0a8]" />
          <div className="h-0.5 w-6 bg-[#d0a898]" />
        </div>
      </div>
    </div>
  );
}
